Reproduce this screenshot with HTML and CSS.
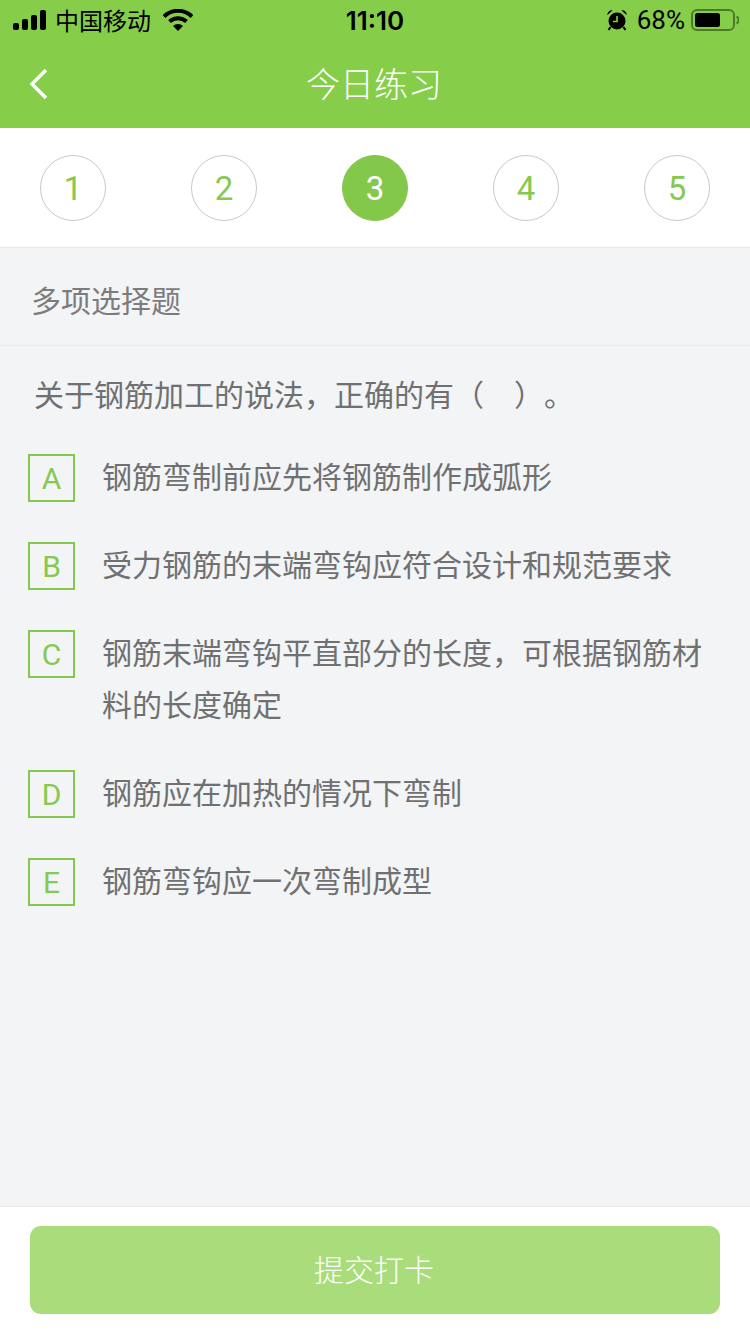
FILE: index.html
```html
<!DOCTYPE html>
<html lang="zh-CN">
<head>
    <meta charset="UTF-8">
    <meta name="viewport" content="width=device-width, initial-scale=1.0">
    <title>今日练习</title>
    <link rel="stylesheet" href="styles.css">
</head>
<body>
    <div class="page">
        <header class="top">
            <div class="status-bar">
                <div class="status-left">
                    <svg class="signal" width="34" height="20" viewBox="0 0 34 20">
                        <rect x="0" y="13" width="6" height="7" rx="2"/>
                        <rect x="9" y="9" width="6" height="11" rx="2"/>
                        <rect x="18" y="5" width="6" height="15" rx="2"/>
                        <rect x="27" y="0" width="6" height="20" rx="2"/>
                    </svg>
                    <span class="carrier">中国移动</span>
                    <svg class="wifi" width="30" height="22" viewBox="0 0 30 22">
                        <path d="M1 7.5 A20 20 0 0 1 29 7.5" fill="none" stroke="#000" stroke-width="4"/>
                        <path d="M6.5 12.5 A12.5 12.5 0 0 1 23.5 12.5" fill="none" stroke="#000" stroke-width="4"/>
                        <path d="M10 17 L15 22 L20 17 A7.5 7.5 0 0 0 10 17 Z"/>
                    </svg>
                </div>
                <div class="time">11:10</div>
                <div class="status-right">
                    <svg class="alarm" width="22" height="22" viewBox="0 0 22 22">
                        <circle cx="11" cy="12" r="8.5"/>
                        <path d="M1.5 6 A4 4 0 0 1 6.5 1.5 Z M20.5 6 A4 4 0 0 0 15.5 1.5 Z"/>
                        <path d="M11 7 V12.5 H7" fill="none" stroke="#86cd4a" stroke-width="1.6"/>
                        <path d="M4.5 18 L2.5 21 M17.5 18 L19.5 21" stroke="#000" stroke-width="2"/>
                    </svg>
                    <span class="battery-text">68%</span>
                    <svg class="battery" width="48" height="24" viewBox="0 0 48 24">
                        <rect x="1" y="2" width="42" height="20" rx="5" fill="none" stroke="#4d7a2b" stroke-width="2"/>
                        <rect x="4" y="5" width="25" height="14" rx="2.5"/>
                        <path d="M45.5 8.5 A4 4 0 0 1 45.5 15.5" fill="none" stroke="#4d7a2b" stroke-width="2"/>
                    </svg>
                </div>
            </div>
            <div class="nav">
                <svg class="back" width="20" height="32" viewBox="0 0 20 32">
                    <path d="M17 2 L3 16 L17 30" fill="none" stroke="#fff" stroke-width="3.4"/>
                </svg>
                <h1>今日练习</h1>
            </div>
        </header>

        <div class="steps">
            <div class="step">1</div>
            <div class="step">2</div>
            <div class="step active">3</div>
            <div class="step">4</div>
            <div class="step">5</div>
        </div>

        <main class="content">
            <div class="type">多项选择题</div>
            <p class="question">关于钢筋加工的说法，正确的有（　）。</p>
            <div class="options">
                <div class="option">
                    <div class="letter">A</div>
                    <div class="option-text">钢筋弯制前应先将钢筋制作成弧形</div>
                </div>
                <div class="option">
                    <div class="letter">B</div>
                    <div class="option-text">受力钢筋的末端弯钩应符合设计和规范要求</div>
                </div>
                <div class="option">
                    <div class="letter">C</div>
                    <div class="option-text">钢筋末端弯钩平直部分的长度，可根据钢筋材料的长度确定</div>
                </div>
                <div class="option">
                    <div class="letter">D</div>
                    <div class="option-text">钢筋应在加热的情况下弯制</div>
                </div>
                <div class="option">
                    <div class="letter">E</div>
                    <div class="option-text">钢筋弯钩应一次弯制成型</div>
                </div>
            </div>
        </main>

        <footer class="bottom">
            <button class="submit">提交打卡</button>
        </footer>
    </div>
</body>
</html>
```
FILE: styles.css
```css
body {
    margin: 0;
    font-family: "Noto Sans CJK SC", "Liberation Sans", sans-serif;
    background-color: #f2f4f6;
}
.page {
    width: 750px;
    height: 1334px;
    display: flex;
    flex-direction: column;
    overflow: hidden;
}
.top {
    height: 128px;
    background-color: #86cd4a;
}
.status-bar {
    height: 40px;
    display: grid;
    grid-template-columns: 1fr auto 1fr;
    align-items: center;
    color: #000;
}
.status-left {
    display: flex;
    align-items: center;
    padding-left: 13px;
}
.signal {
    margin-right: 8px;
}
.carrier {
    font-size: 24px;
    line-height: 38px;
}
.wifi {
    margin-left: 12px;
}
.time {
    font-family: Inter, "Liberation Sans", sans-serif;
    font-size: 26px;
    font-weight: 600;
}
.status-right {
    display: flex;
    align-items: center;
    justify-content: flex-end;
    padding-right: 11px;
}
.battery-text {
    font-family: Roboto, "Liberation Sans", sans-serif;
    font-size: 26px;
    margin-left: 9px;
    margin-right: 6px;
}
.nav {
    height: 88px;
    position: relative;
    display: flex;
    align-items: center;
    justify-content: center;
    padding-right: 2px;
}
.back {
    position: absolute;
    left: 29px;
    top: 28px;
}
.nav h1 {
    margin: 0 0 4px;
    font-size: 34px;
    font-weight: 300;
    color: #fff;
}
.steps {
    height: 120px;
    box-sizing: border-box;
    background-color: #fff;
    border-bottom: 1px solid #e6e8ea;
    padding: 27px 40px 0;
    display: flex;
    justify-content: space-between;
}
.step {
    width: 66px;
    height: 66px;
    box-sizing: border-box;
    border: 1px solid #c9c9c9;
    border-radius: 50%;
    display: flex;
    align-items: center;
    justify-content: center;
    font-family: Roboto, "Liberation Sans", sans-serif;
    font-size: 33px;
    color: #86c950;
}
.step.active {
    background-color: #84c84b;
    border-color: #84c84b;
    color: #fff;
}
.content {
    flex: 1;
}
.type {
    height: 98px;
    box-sizing: border-box;
    border-bottom: 1px solid #e9ebed;
    padding-left: 31px;
    font-size: 30px;
    line-height: 102px;
    color: #7c7c7c;
}
.question {
    margin: 0;
    padding: 21px 0 0 34px;
    font-size: 30px;
    line-height: 52px;
    color: #707070;
    text-spacing-trim: space-all;
}
.options {
    padding: 31px 28px 0;
    display: flex;
    flex-direction: column;
    gap: 36px;
}
.option {
    display: flex;
    gap: 27px;
}
.letter {
    width: 47px;
    height: 48px;
    margin-top: 4px;
    flex-shrink: 0;
    box-sizing: border-box;
    border: 2px solid #82c84c;
    display: flex;
    align-items: center;
    justify-content: center;
    font-family: Roboto, "Liberation Sans", sans-serif;
    font-size: 30px;
    color: #86c950;
}
.option-text {
    margin: -1px 0 1px;
    font-size: 30px;
    line-height: 52px;
    color: #707070;
}
.bottom {
    height: 128px;
    box-sizing: border-box;
    background-color: #fff;
    border-top: 1px solid #e6e8ea;
    padding: 19px 30px 0;
}
.submit {
    width: 690px;
    height: 88px;
    border: none;
    border-radius: 11px;
    background-color: #a9dc7a;
    font-family: inherit;
    font-size: 30px;
    font-weight: 300;
    color: #fff;
    padding: 0 2px 4px 0;
}
```
